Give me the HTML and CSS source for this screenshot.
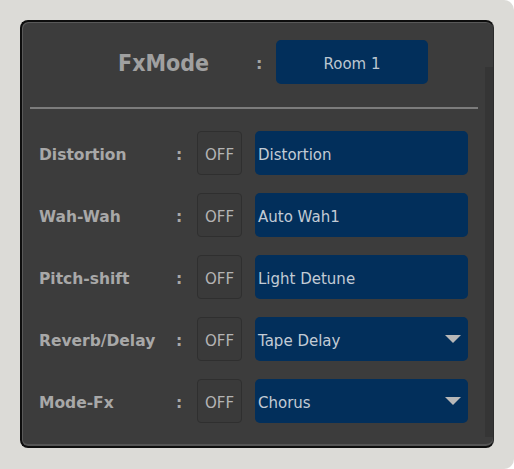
FILE: index.html
```html
<!DOCTYPE html>
<html>
<head>
<meta charset="utf-8">
<link rel="stylesheet" href="styles.css">
</head>
<body>
<div class="frame">
  <div class="panel">
    <div class="scroll"></div>
    <div class="header">
      <div class="title">FxMode</div>
      <div class="hcolon">:</div>
      <div class="room">Room 1</div>
    </div>
    <div class="sep"></div>
    <div class="rows">
      <div class="row">
        <div class="label">Distortion</div>
        <div class="colon">:</div>
        <div class="off">OFF</div>
        <div class="field">Distortion</div>
      </div>
      <div class="row">
        <div class="label">Wah-Wah</div>
        <div class="colon">:</div>
        <div class="off">OFF</div>
        <div class="field">Auto Wah1</div>
      </div>
      <div class="row">
        <div class="label">Pitch-shift</div>
        <div class="colon">:</div>
        <div class="off">OFF</div>
        <div class="field">Light Detune</div>
      </div>
      <div class="row">
        <div class="label">Reverb/Delay</div>
        <div class="colon">:</div>
        <div class="off">OFF</div>
        <div class="field select"><span>Tape Delay</span><span class="arrow"></span></div>
      </div>
      <div class="row">
        <div class="label">Mode-Fx</div>
        <div class="colon">:</div>
        <div class="off">OFF</div>
        <div class="field select"><span>Chorus</span><span class="arrow"></span></div>
      </div>
    </div>
  </div>
</div>
</body>
</html>
```
FILE: styles.css
```css
html, body {
  margin: 0;
  padding: 0;
  background: #ffffff;
}
body {
  width: 514px;
  height: 469px;
  overflow: hidden;
  font-family: "DejaVu Sans", sans-serif;
}
.frame {
  width: 514px;
  height: 469px;
  box-sizing: border-box;
  background: #dcdbd7;
  border-radius: 0 10px 10px 0;
  padding: 20px 20px 21px 20px;
}
.panel {
  position: relative;
  width: 474px;
  height: 428px;
  box-sizing: border-box;
  background: #3c3c3c;
  border-top: 2px solid #0e0e0e;
  border-left: 2px solid #0e0e0e;
  border-bottom: 2px solid #0e0e0e;
  border-right: 1px solid #2c2c2c;
  border-radius: 8px;
  box-shadow: inset 1px 1px 0 #595959, inset 0 -2px 0 #555555;
  padding: 18px 0 0 0;
}
.scroll {
  position: absolute;
  right: 0;
  top: 45px;
  width: 8px;
  height: 370px;
  background: #353535;
}
.header {
  display: flex;
  align-items: center;
  height: 44px;
}
.title {
  margin-left: 96px;
  width: 138px;
  font-family: "DejaVu Sans Condensed", "DejaVu Sans", sans-serif;
  font-weight: bold;
  font-size: 23px;
  color: #a0a0a0;
  padding-top: 2px;
}
.hcolon {
  width: 20px;
  font-weight: bold;
  font-size: 16px;
  color: #a4a4a4;
  padding-top: 2px;
}
.room {
  width: 152px;
  height: 44px;
  box-sizing: border-box;
  padding-top: 3px;
  border-radius: 5px;
  background: #022f5b;
  color: #bcc6d1;
  font-size: 15px;
  display: flex;
  align-items: center;
  justify-content: center;
}
.sep {
  height: 2px;
  background: #7c7c7c;
  margin: 23px 15px 0 8px;
}
.rows {
  display: flex;
  flex-direction: column;
  gap: 18px;
  margin-top: 22px;
  padding-left: 17px;
}
.row {
  display: flex;
  align-items: center;
  height: 44px;
}
.label, .colon {
  font-weight: bold;
  font-size: 15.5px;
  color: #a8a8a8;
  padding-top: 4px;
}
.label {
  width: 139px;
}
.colon {
  width: 19px;
  margin-left: -2px;
  margin-right: 2px;
}
.off {
  width: 45px;
  height: 44px;
  box-sizing: border-box;
  border: 1px solid #2f2f2f;
  border-radius: 4px;
  background: #3a3a3a;
  color: #b4b4b4;
  font-size: 15px;
  padding-top: 3px;
  display: flex;
  align-items: center;
  justify-content: center;
  margin-right: 13px;
}
.field {
  width: 213px;
  height: 44px;
  box-sizing: border-box;
  border-radius: 5px;
  background: #022f5b;
  color: #c2cbd5;
  font-size: 15px;
  display: flex;
  align-items: center;
  justify-content: space-between;
  padding: 3px 7px 0 3px;
}
.arrow {
  width: 0;
  height: 0;
  border-left: 8px solid transparent;
  border-right: 8px solid transparent;
  border-top: 8px solid #b8b8b8;
  margin-top: -3px;
}
```
